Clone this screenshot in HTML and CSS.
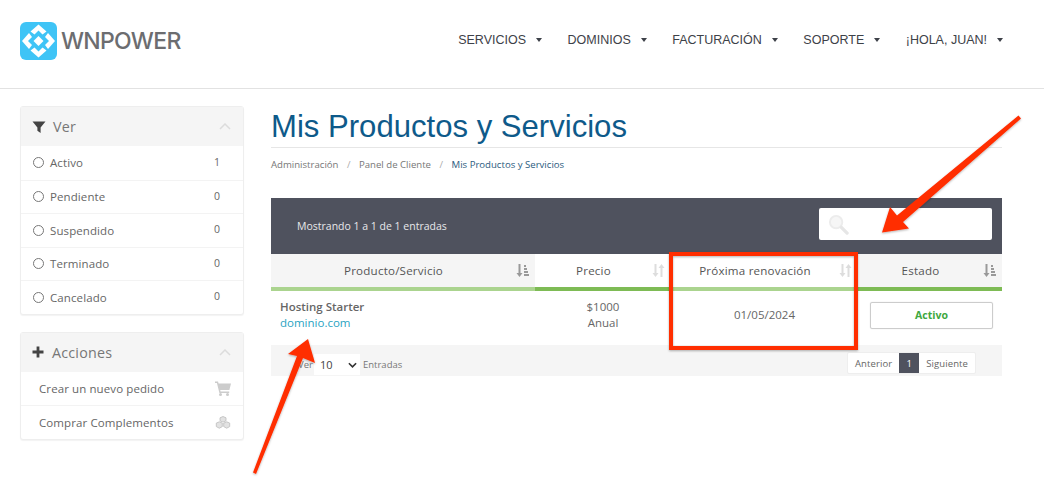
FILE: index.html
```html
<!DOCTYPE html>
<html lang="es">
<head>
<meta charset="utf-8">
<title>Mis Productos y Servicios</title>
<link rel="stylesheet" href="styles.css">
</head>
<body>
<header class="topbar">
  <a class="brand">
    <svg class="brand-icon" viewBox="0 0 37 38" width="37" height="38">
      <rect width="37" height="38" rx="6" fill="#3fc4f6"/>
      <g fill="#fff" transform="translate(18.500 19)">
        <path d="M0-16.500L8-9.500 4-6.500 0-10.500-4-6.500-8-9.500Z"/>
        <path d="M0-16.500L8-9.500 4-6.500 0-10.500-4-6.500-8-9.500Z" transform="rotate(90)"/>
        <path d="M0-16.500L8-9.500 4-6.500 0-10.500-4-6.500-8-9.500Z" transform="rotate(180)"/>
        <path d="M0-16.500L8-9.500 4-6.500 0-10.500-4-6.500-8-9.500Z" transform="rotate(270)"/>
        <path d="M0-5L5 0 0 5-5 0Z"/>
      </g>
    </svg>
    <span class="brand-name">WNPOWER</span>
  </a>
  <nav class="mainnav">
    <a>SERVICIOS<i class="caret"></i></a>
    <a>DOMINIOS<i class="caret"></i></a>
    <a>FACTURACIÓN<i class="caret"></i></a>
    <a>SOPORTE<i class="caret"></i></a>
    <a>¡HOLA, JUAN!<i class="caret"></i></a>
  </nav>
</header>

<div class="layout">
  <aside class="sidebar">
    <section class="panel">
      <div class="panel-head">
        <svg class="head-icon" viewBox="0 0 14 14" width="14" height="14"><path fill="#444" d="M0.500 1.500h13L8.600 7.400V13L5.400 10.800V7.400Z"/></svg>
        <span class="panel-title">Ver</span>
        <svg class="chev" viewBox="0 0 12 7" width="12" height="7"><path fill="none" stroke="#dcdcdc" stroke-width="1.500" d="M1 6l5-5 5 5"/></svg>
      </div>
      <div class="panel-row"><i class="radio"></i><span class="row-label">Activo</span><span class="count">1</span></div>
      <div class="panel-row"><i class="radio"></i><span class="row-label">Pendiente</span><span class="count">0</span></div>
      <div class="panel-row"><i class="radio"></i><span class="row-label">Suspendido</span><span class="count">0</span></div>
      <div class="panel-row"><i class="radio"></i><span class="row-label">Terminado</span><span class="count">0</span></div>
      <div class="panel-row"><i class="radio"></i><span class="row-label">Cancelado</span><span class="count">0</span></div>
    </section>
    <section class="panel">
      <div class="panel-head">
        <svg class="head-icon" viewBox="0 0 12 12" width="12" height="12"><path fill="#444" d="M4.600 0.500h2.800v4.100h4.100v2.800H7.400v4.100H4.600V7.400H0.500V4.600h4.100Z"/></svg>
        <span class="panel-title acciones">Acciones</span>
        <svg class="chev" viewBox="0 0 12 7" width="12" height="7"><path fill="none" stroke="#dcdcdc" stroke-width="1.500" d="M1 6l5-5 5 5"/></svg>
      </div>
      <div class="panel-row action"><span class="row-label">Crear un nuevo pedido</span>
        <svg viewBox="0 0 16 15" width="16" height="15"><path fill="#ccc" d="M0 0.500h3l.6 2H16l-1.600 6.500H5.200l.4 1.500h8.600v1.500H4.400L1.900 2H0Z"/><circle cx="5.500" cy="13.500" r="1.500" fill="#ccc"/><circle cx="12.500" cy="13.500" r="1.500" fill="#ccc"/></svg>
      </div>
      <div class="panel-row action"><span class="row-label">Comprar Complementos</span>
        <svg viewBox="0 0 16 13" width="16" height="13"><g fill="#e2e2e2" stroke="#bcbcbc" stroke-width=".8"><path d="M8 .5l3 1.300v3L8 6.100 5 4.800v-3Z"/><path d="M4.300 5.800l3 1.300v3.500l-3 1.600-3-1.600V7.100Z"/><path d="M11.700 5.800l3 1.300v3.500l-3 1.600-3-1.600V7.100Z"/></g></svg>
      </div>
    </section>
  </aside>

  <main class="content">
    <h1 class="page-title">Mis Productos y Servicios</h1>
    <ol class="crumbs">
      <li>Administración</li>
      <li class="sep">/</li>
      <li>Panel de Cliente</li>
      <li class="sep">/</li>
      <li class="current">Mis Productos y Servicios</li>
    </ol>

    <div class="listbar">
      <span>Mostrando 1 a 1 de 1 entradas</span>
      <div class="search">
        <svg viewBox="0 0 22 22" width="21" height="21"><circle cx="8.500" cy="8.500" r="6.500" fill="#f6f6f6" stroke="#ececec" stroke-width="2"/><path stroke="#e6e6e6" stroke-width="3.500" stroke-linecap="round" d="M14 14l6 6"/></svg>
      </div>
    </div>

    <table class="grid">
      <colgroup><col class="c1"><col class="c2"><col class="c3"><col class="c4"></colgroup>
      <thead>
        <tr>
          <th class="sorted"><div class="th-in"><span>Producto/Servicio</span>
            <svg class="sort" viewBox="0 0 13 13" width="13" height="13"><path fill="#999" d="M2.500 0h2v9h2L3.500 13 .5 9h2Z"/><path fill="#999" d="M8 1h2v2H8Zm0 3h3v2H8Zm0 3h4v2H8Zm0 3h5v2H8Z"/></svg></div></th>
          <th class="light"><div class="th-in"><span>Precio</span>
            <svg class="sort" viewBox="0 0 13 13" width="13" height="13"><path fill="#ddd" d="M2.500 0h2v9h2L3.500 13 .5 9h2ZM8.500 13h2V4h2L9.500 0l-3 4h2Z"/></svg></div></th>
          <th><div class="th-in"><span>Próxima renovación</span>
            <svg class="sort" viewBox="0 0 13 13" width="13" height="13"><path fill="#ddd" d="M2.500 0h2v9h2L3.500 13 .5 9h2ZM8.500 13h2V4h2L9.500 0l-3 4h2Z"/></svg></div></th>
          <th class="sorted light"><div class="th-in"><span>Estado</span>
            <svg class="sort" viewBox="0 0 13 13" width="13" height="13"><path fill="#999" d="M2.500 0h2v9h2L3.500 13 .5 9h2Z"/><path fill="#999" d="M8 1h2v2H8Zm0 3h3v2H8Zm0 3h4v2H8Zm0 3h5v2H8Z"/></svg></div></th>
        </tr>
      </thead>
      <tbody>
        <tr>
          <td class="product"><strong>Hosting Starter</strong><a>dominio.com</a></td>
          <td class="center">$1000<br>Anual</td>
          <td class="center">01/05/2024</td>
          <td class="center"><span class="status">Activo</span></td>
        </tr>
      </tbody>
    </table>

    <div class="listfoot">
      <div class="perpage">
        <span>Ver</span>
        <span class="select">10<svg viewBox="0 0 10 6" width="9" height="6"><path fill="none" stroke="#333" stroke-width="1.800" d="M1 1l4 4 4-4"/></svg></span>
        <span>Entradas</span>
      </div>
      <div class="pager"><a class="prev">Anterior</a><a class="on">1</a><a class="next">Siguiente</a></div>
    </div>
  </main>
</div>

<svg class="annotations" viewBox="0 0 1044 483" width="1044" height="483">
  <defs><filter id="soft" x="-5%" y="-5%" width="110%" height="110%"><feDropShadow dx="0" dy="1" stdDeviation="1" flood-color="#000" flood-opacity=".3"/></filter></defs>
  <g filter="url(#soft)">
    <rect x="671" y="254" width="185" height="94" fill="none" stroke="#ff2d00" stroke-width="4"/>
    <path fill="#ff2d00" d="M1018.500 115.500L1021 118.500L903 222L909 228.500L882 232.500L890 207L897 215.500Z"/>
    <path fill="#ff2d00" d="M253 472.500L256 474L303 358L315 363L308 339L288 354L297 356Z"/>
  </g>
</svg>
</body>
</html>
```
FILE: styles.css
```css
* { box-sizing: border-box; }
html, body { margin: 0; padding: 0; height: 483px; overflow: hidden; background: #fff; }
body { font-family: "Open Sans", sans-serif; color: #666; font-size: 12px; position: relative; }
a { color: inherit; text-decoration: none; }

.topbar {
  height: 89px;
  border-bottom: 1px solid #e2e2e2;
  display: flex;
  align-items: center;
  justify-content: space-between;
  padding: 0 41px 8px 20px;
}
.brand { display: flex; align-items: center; gap: 4px; padding-top: 1px; }
.brand-icon { display: block; }
.brand-name { font-family: "Inter", sans-serif; font-size: 23px; letter-spacing: -.7px; color: #6c6d70; line-height: 1; font-weight: 500; margin-top: 2px; }
.mainnav { display: flex; gap: 25.500px; font-family: "Liberation Sans", sans-serif; font-size: 12.500px; color: #3d4148; }
.mainnav a { display: flex; align-items: center; }
.caret { width: 0; height: 0; margin-left: 10px; border: 3.500px solid transparent; border-top: 4px solid #3d4148; border-bottom: 0; }

.layout { display: flex; padding: 17px 42px 0 20px; gap: 27px; }
.sidebar { width: 224px; flex: none; display: flex; flex-direction: column; gap: 17px; }
.panel { border: 1px solid #eee; border-radius: 3px; box-shadow: 0 1px 1px rgba(0,0,0,.05); background: #fff; }
.panel-head { height: 39px; background: #f5f5f5; display: flex; align-items: center; padding: 0 12px 0 11px; }
.head-icon { flex: none; }
.panel-title { margin-left: 7px; font-size: 14.300px; color: #777; flex: 1; letter-spacing: .2px; }
.acciones { margin-left: 8px; }
.panel-row { height: 33.500px; display: flex; align-items: center; padding: 0 23px 0 12px; border-top: 1px solid #f3f3f3; font-size: 11.500px; letter-spacing: .1px; }
.panel-head + .panel-row { border-top: 0; }
.radio { width: 11px; height: 11px; border: 1px solid #777; border-radius: 50%; margin-right: 6px; flex: none; }
.row-label { flex: 1; }
.count { font-size: 10.500px; position: relative; top: -1px; }
.action { padding: 0 12px 0 18px; }

.content { flex: 1; min-width: 0; }
.page-title {
  margin: 0;
  font-family: "Liberation Sans", sans-serif;
  font-weight: 400;
  font-size: 31.100px;
  line-height: 41px;
  color: #0e5a8a;
  border-bottom: 1px solid #e6e6e6;
  height: 42px;
}
.crumbs { list-style: none; margin: 0; padding: 10px 0 0; display: flex; gap: 7px; font-size: 9.600px; line-height: 13px; color: #777; height: 50px; }
.crumbs .sep { color: #aaa; margin: 0 1.500px; }
.crumbs .current { color: #2b5b7e; }

.listbar { height: 56px; background: #4f525e; color: #e8e8ea; font-size: 10.500px; display: flex; align-items: center; justify-content: space-between; padding: 0 10px 0 26px; }
.search { width: 173px; height: 32px; align-self: flex-start; margin-top: 10px; background: #fff; border-radius: 2px; display: flex; align-items: center; padding-left: 9px; }
.search svg { display: block; }

.grid { width: 100%; border-collapse: collapse; table-layout: fixed; }
.c1 { width: 264px; } .c2 { width: 136px; } .c3 { width: 187px; } .c4 { width: 144px; }
.grid th { font-weight: 400; font-size: 11.600px; color: #555; height: 35px; padding: 0 0 1px; border-bottom: 4px solid #abd48f; letter-spacing: .2px; }
.grid th.light { border-bottom-color: #7ebb55; }
.grid th.sorted { background: #f5f5f5; }
.th-in { display: flex; align-items: center; padding: 0 6px 0 0; }
.th-in span { flex: 1; text-align: center; }
.sort { flex: none; display: block; }
.grid td { height: 56px; font-size: 11.500px; line-height: 16.500px; padding: 0 9px 6px; color: #666; }
.grid td.center { text-align: center; }
.product strong { display: block; font-weight: 600; }
.product a { display: block; color: #2aa3c2; font-size: 11.500px; }
.status { display: block; height: 27px; line-height: 24px; width: 123px; margin: 0 0 0 3px; border: 1px solid #ccc; border-radius: 2px; color: #3fa83f; font-weight: 700; font-size: 10.500px; box-shadow: 0 0 1px rgba(0,0,0,.2); }

.listfoot { height: 31px; background: #f5f5f5; display: flex; align-items: flex-start; justify-content: space-between; padding: 7px 26px 0 0; }
.perpage { display: flex; align-items: center; font-size: 9.500px; color: #777; height: 21px; margin-top: 2px; }
.perpage > span:first-child { margin-left: 27px; width: 16px; }
.select { width: 46px; height: 21px; background: #fff; display: flex; align-items: center; justify-content: space-between; padding: 0 3px 0 6px; margin-right: 3px; font-size: 11px; color: #444; }
.pager { display: flex; font-size: 9.500px; height: 22px; background: #fff; border: 1px solid #eee; border-radius: 2px; letter-spacing: .1px; }
.pager a { display: flex; align-items: center; padding: 0 7px; }
.pager .on { background: #4f525e; color: #fff; width: 20px; padding: 0; justify-content: center; }

.annotations { position: absolute; left: 0; top: 0; display: block; pointer-events: none; }
```
